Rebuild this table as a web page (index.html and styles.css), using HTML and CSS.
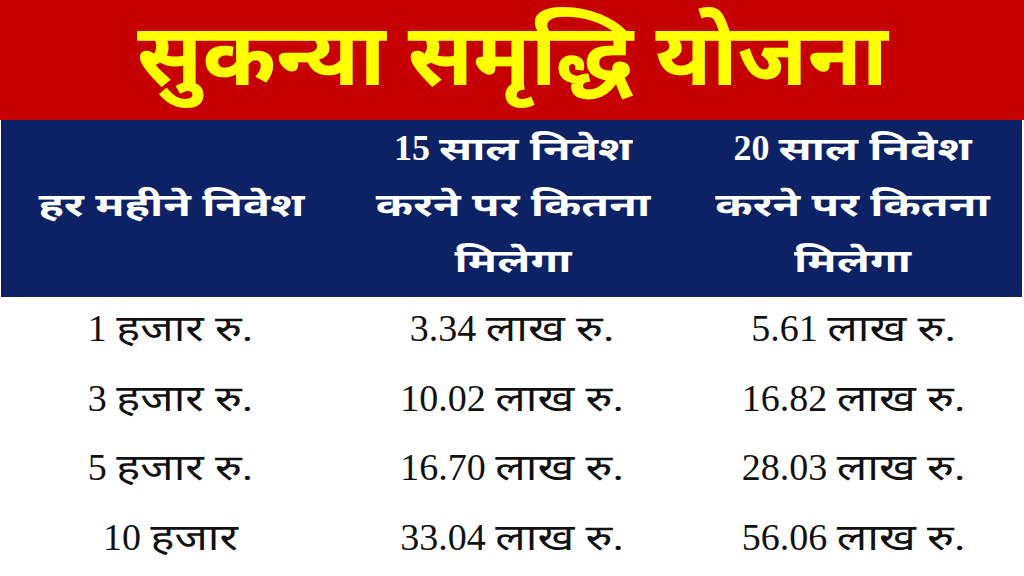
FILE: index.html
```html
<!DOCTYPE html>
<html lang="hi">
<head>
<meta charset="utf-8">
<title>सुकन्या समृद्धि योजना</title>
<link rel="stylesheet" href="styles.css">
</head>
<body>
<div class="page">
  <header class="banner">
    <h1 class="title">सुकन्या समृद्धि योजना</h1>
  </header>
  <div class="table">
    <div class="head">
      <div class="hcell"><span class="dv">हर महीने निवेश</span></div>
      <div class="hcell">15 <span class="dv">साल निवेश</span><br><span class="dv">करने पर कितना</span><br><span class="dv">मिलेगा</span></div>
      <div class="hcell">20 <span class="dv">साल निवेश</span><br><span class="dv">करने पर कितना</span><br><span class="dv">मिलेगा</span></div>
    </div>
    <div class="body">
      <div class="cell">1 <span class="dv">हजार रु.</span></div>
      <div class="cell">3.34 <span class="dv">लाख रु.</span></div>
      <div class="cell">5.61 <span class="dv">लाख रु.</span></div>
      <div class="cell">3 <span class="dv">हजार रु.</span></div>
      <div class="cell">10.02 <span class="dv">लाख रु.</span></div>
      <div class="cell">16.82 <span class="dv">लाख रु.</span></div>
      <div class="cell">5 <span class="dv">हजार रु.</span></div>
      <div class="cell">16.70 <span class="dv">लाख रु.</span></div>
      <div class="cell">28.03 <span class="dv">लाख रु.</span></div>
      <div class="cell">10 <span class="dv">हजार</span></div>
      <div class="cell">33.04 <span class="dv">लाख रु.</span></div>
      <div class="cell">56.06 <span class="dv">लाख रु.</span></div>
    </div>
  </div>
</div>
</body>
</html>
```
FILE: styles.css
```css
* { box-sizing: border-box; }
html, body {
  margin: 0;
  padding: 0;
  background: #ffffff;
}
body {
  width: 1024px;
  height: 576px;
  overflow: hidden;
  font-family: "Liberation Serif", "Noto Sans Devanagari", serif;
}
.page {
  display: flex;
  flex-direction: column;
  width: 1024px;
  height: 576px;
}
.banner {
  height: 120px;
  padding-bottom: 8px;
  background: #c60000;
  display: flex;
  align-items: center;
  justify-content: center;
}
.title {
  margin: 0;
  color: #ffff00;
  font-size: 86px;
  font-weight: bold;
  line-height: 1;
  white-space: nowrap;
  transform: scaleX(1.03);
}
.table {
  display: flex;
  flex-direction: column;
}
.head {
  display: grid;
  grid-template-columns: 341px 342px 337px;
  height: 177px;
  padding-bottom: 29px;
  margin: 0 2px 0 1px;
  background: #0c2264;
  align-items: center;
}
.hcell {
  text-align: center;
  color: #ffffff;
  font-size: 36px;
  font-weight: bold;
  line-height: 56px;
  white-space: nowrap;
}
.dv {
  display: inline-block;
  line-height: 1;
  transform-origin: 50% 83.75%;
}
.hcell .dv {
  font-size: 45px;
  transform: scaleY(0.7);
}
.body {
  display: grid;
  grid-template-columns: 341px 342px 341px;
  grid-auto-rows: 69.5px;
  margin-top: -5px;
  align-items: center;
}
.cell {
  text-align: center;
  color: #111111;
  font-size: 38px;
  line-height: 1;
  white-space: nowrap;
}
.cell .dv {
  font-size: 45px;
  transform: scaleY(0.8);
}
```
